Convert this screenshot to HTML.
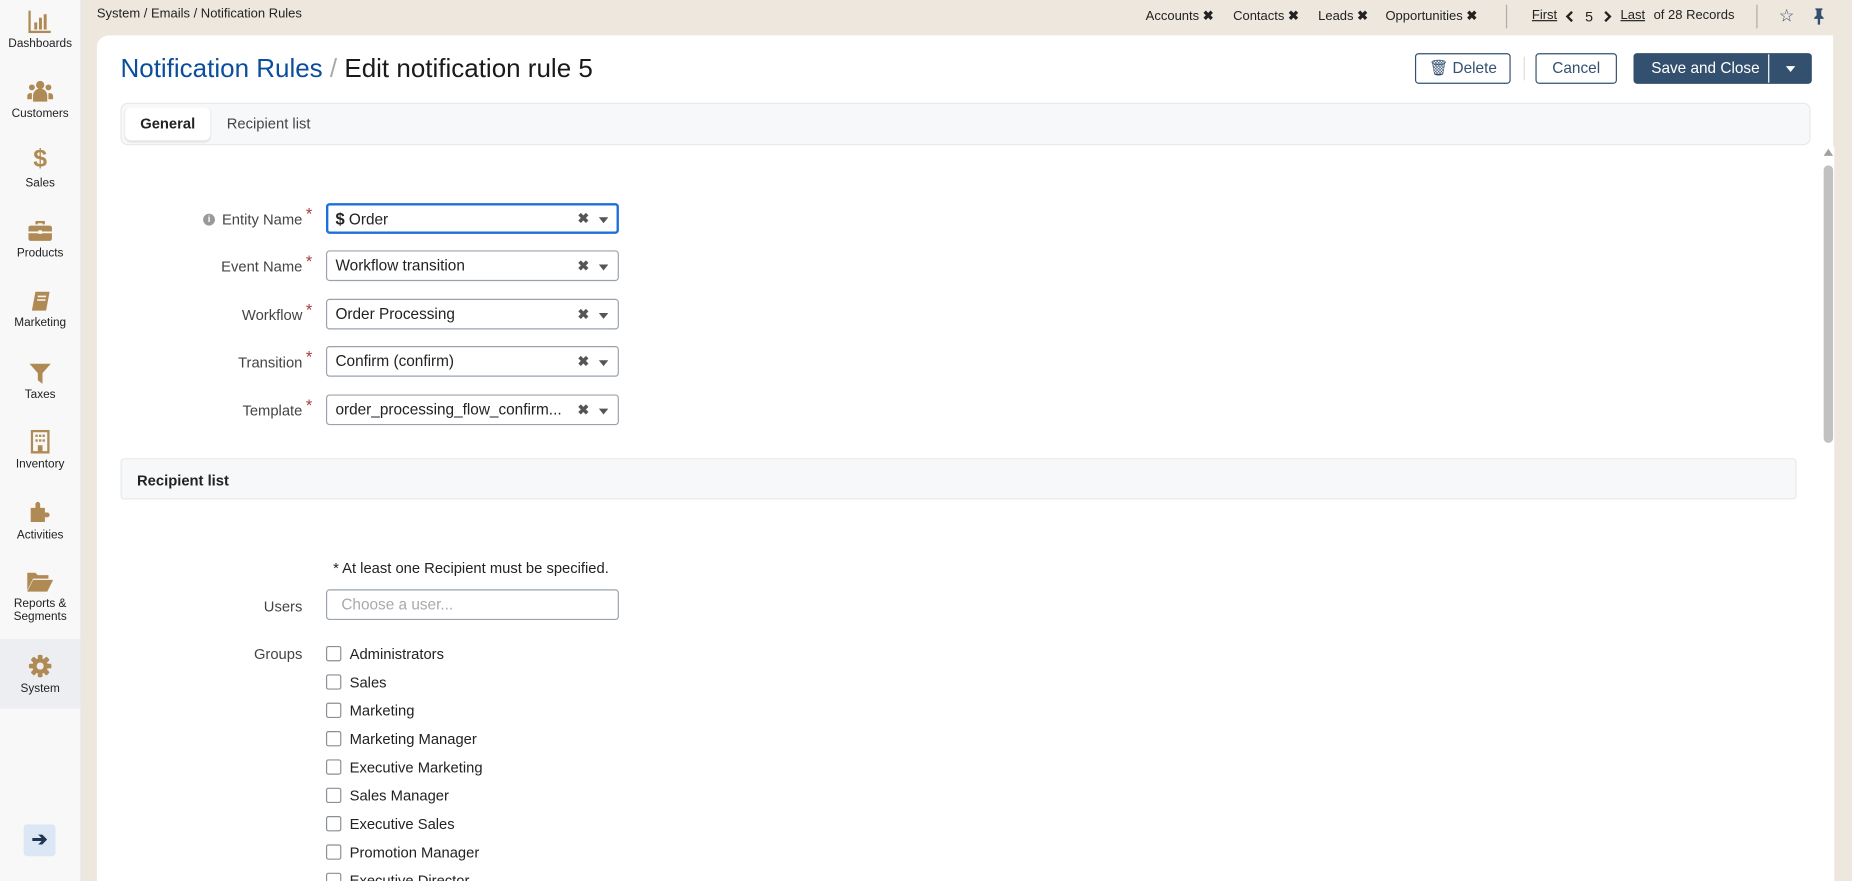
<!DOCTYPE html>
<html><head><meta charset="utf-8">
<style>
html,body{margin:0;padding:0;width:1852px;height:881px;overflow:hidden;background:#fff;}
#w{position:absolute;left:0;top:0;width:1568px;height:746px;transform:scale(1.18112,1.18097);transform-origin:0 0;font-family:"Liberation Sans",sans-serif;color:#222;font-size:12.5px;background:#ede7de;overflow:hidden;}
.a{position:absolute;}
#side{left:0;top:0;width:68px;height:746px;background:#f8f8f8;border-right:1px solid #e6e6e6;}
.si{position:absolute;left:0;width:68px;text-align:center;font-size:10px;color:#222;line-height:11px;}
.si svg{display:block;margin:0 auto 4px;}
#card{left:82px;top:30px;width:1470px;height:730px;background:#fff;border-top-left-radius:10px;}
.btn{position:absolute;height:26px;border:1px solid #34506f;border-radius:3px;box-sizing:border-box;color:#34506f;font-size:13px;line-height:24px;text-align:center;background:#fff;}
.lbl{position:absolute;right:1312px;width:150px;text-align:right;font-size:12.5px;color:#444;}
.star{position:absolute;left:259px;color:#b03a3a;font-size:14px;}
.sel{position:absolute;left:276px;width:248px;height:26px;border:1px solid #9aa3ad;border-radius:3px;box-sizing:border-box;font-size:13px;line-height:24px;padding-left:7px;color:#222;}
.sel .x{position:absolute;right:24px;top:0;font-size:12px;color:#555;font-weight:bold;}
.sel .c{position:absolute;right:8px;top:11px;width:0;height:0;border-left:4px solid transparent;border-right:4px solid transparent;border-top:5px solid #555;}
.cb{position:absolute;left:276px;width:13px;height:13px;border:1px solid #8a8f96;border-radius:2px;box-sizing:border-box;background:#fff;}
.ct{position:absolute;left:296px;font-size:12.5px;color:#222;}
.tb{position:absolute;top:7px;font-size:11px;color:#222;}
</style></head><body><div id="w">

<div class="a" style="left:82px;top:6px;font-size:11px;color:#222;">System / Emails / Notification Rules</div>
<div class="tb" style="left:970px">Accounts <b>✖</b></div>
<div class="tb" style="left:1044px">Contacts <b>✖</b></div>
<div class="tb" style="left:1116px">Leads <b>✖</b></div>
<div class="tb" style="left:1173px">Opportunities <b>✖</b></div>
<div class="a" style="left:1275px;top:4px;width:1px;height:20px;background:#aaa"></div>
<div class="tb" style="left:1297px;text-decoration:underline">First</div>
<svg class="a" style="left:1325px;top:9px" width="8" height="10" viewBox="0 0 8 10"><path d="M6 1L2 5l4 4" stroke="#222" stroke-width="2" fill="none"/></svg>
<div class="tb" style="left:1342px;font-size:12px">5</div>
<svg class="a" style="left:1357px;top:9px" width="8" height="10" viewBox="0 0 8 10"><path d="M2 1l4 4-4 4" stroke="#222" stroke-width="2" fill="none"/></svg>
<div class="tb" style="left:1372px;text-decoration:underline">Last</div>
<div class="tb" style="left:1400px">of 28 Records</div>
<div class="a" style="left:1487px;top:4px;width:1px;height:20px;background:#aaa"></div>
<div class="tb" style="left:1506px;top:4px;font-size:15px;color:#34506f">☆</div>
<svg class="a" style="left:1535px;top:7px" width="10" height="14" viewBox="0 0 10 14"><path d="M2 0h6v1l-1 1v4l2 2v1H6v5H4V9H1V8l2-2V2L2 1z" fill="#34506f"/></svg>

<div id="side" class="a">
 <div class="si" style="top:8px"><svg width="20" height="20" viewBox="0 0 20 20"><path d="M1 1v18h18" stroke="#b08a55" stroke-width="2" fill="none"/><rect x="5" y="11" width="2.5" height="6" fill="#b08a55"/><rect x="9" y="7" width="2.5" height="10" fill="#b08a55"/><rect x="13" y="4" width="2.5" height="13" fill="#b08a55"/></svg>Dashboards</div>
 <div class="si" style="top:67px"><svg width="22" height="20" viewBox="0 0 22 20"><circle cx="11" cy="5" r="3.5" fill="#b08a55"/><circle cx="4" cy="7" r="2.5" fill="#b08a55"/><circle cx="18" cy="7" r="2.5" fill="#b08a55"/><path d="M5 19v-5a6 6 0 0112 0v5z" fill="#b08a55"/><path d="M0 17v-3a3 3 0 014-2v5zM22 17v-3a3 3 0 00-4-2v5z" fill="#b08a55"/></svg>Customers</div>
 <div class="si" style="top:125px"><div style="font-size:21px;font-weight:bold;color:#b08a55;line-height:20px;margin-bottom:5px">$</div>Sales</div>
 <div class="si" style="top:187px"><svg width="20" height="18" viewBox="0 0 20 18"><path d="M7 3V1h6v2" stroke="#b08a55" stroke-width="2" fill="none"/><rect x="0" y="4" width="20" height="13" rx="2" fill="#b08a55"/><rect x="0" y="9" width="20" height="1.5" fill="#f8f8f8"/><rect x="8.5" y="8" width="3" height="3" fill="#f8f8f8"/></svg>Products</div>
 <div class="si" style="top:246px"><svg width="18" height="18" viewBox="0 0 18 18"><path d="M5 1h12l-3 16H2z" fill="#b08a55"/><path d="M7 5h7M6.5 8h7" stroke="#f8f8f8" stroke-width="1.3"/></svg>Marketing</div>
 <div class="si" style="top:307px"><svg width="18" height="18" viewBox="0 0 18 18"><path d="M0 1h18l-7 8v9l-4-3V9z" fill="#b08a55"/></svg>Taxes</div>
 <div class="si" style="top:364px"><svg width="16" height="20" viewBox="0 0 16 20"><rect x="1" y="1" width="14" height="18" fill="none" stroke="#b08a55" stroke-width="2"/><g fill="#b08a55"><rect x="4" y="4" width="2" height="2"/><rect x="7" y="4" width="2" height="2"/><rect x="10" y="4" width="2" height="2"/><rect x="4" y="8" width="2" height="2"/><rect x="7" y="8" width="2" height="2"/><rect x="10" y="8" width="2" height="2"/><rect x="6" y="13" width="4" height="6"/></g></svg>Inventory</div>
 <div class="si" style="top:424px"><svg width="20" height="20" viewBox="0 0 20 20"><path d="M2 6h4V3a2 2 0 014 0v3h4v4h2a2 2 0 010 4h-2v4H2z" fill="#b08a55"/></svg>Activities</div>
 <div class="si" style="top:484px"><svg width="22" height="18" viewBox="0 0 22 18"><path d="M0 1h7l2 2h9v3H5L0 16z" fill="#b08a55"/><path d="M5 7h17l-5 10H0z" fill="#b08a55"/></svg>Reports &amp;<br>Segments</div>
 <div class="a" style="left:0;top:541px;width:68px;height:59px;background:#eceef1"></div>
 <div class="si" style="top:554px"><svg width="20" height="20" viewBox="0 0 20 20"><g fill="#b08a55"><circle cx="10" cy="10" r="6.5"/><rect x="8" y="0.5" width="4" height="19" rx="1"/><rect x="8" y="0.5" width="4" height="19" rx="1" transform="rotate(45 10 10)"/><rect x="8" y="0.5" width="4" height="19" rx="1" transform="rotate(90 10 10)"/><rect x="8" y="0.5" width="4" height="19" rx="1" transform="rotate(135 10 10)"/></g><circle cx="10" cy="10" r="3" fill="#eceef1"/></svg>System</div>
 <div class="a" style="left:20px;top:698px;width:27px;height:27px;background:#dbe7f4;border-radius:3px;text-align:center;line-height:27px;font-size:16px;font-weight:bold;color:#1f3550">➔</div>
</div>

<div id="card" class="a"></div>
<div class="a" style="left:102px;top:45px;font-size:22px;color:#0b4e9c">Notification Rules <span style="color:#aaa">/</span> <span style="color:#1a1a1a">Edit notification rule 5</span></div>

<div class="btn" style="left:1198px;top:45px;width:81px">🗑 Delete</div>
<div class="a" style="left:1290px;top:48px;width:1px;height:20px;background:#ddd"></div>
<div class="btn" style="left:1300px;top:45px;width:69px">Cancel</div>
<div class="btn" style="left:1383px;top:45px;width:151px;background:#34506f;color:#fff;text-align:left;padding-left:14px">Save and Close</div>
<div class="a" style="left:1497px;top:46px;width:1px;height:24px;background:#fff"></div>
<div class="a" style="left:1512px;top:56px;border-left:4px solid transparent;border-right:4px solid transparent;border-top:5px solid #fff"></div>

<div class="a" style="left:102px;top:87px;width:1431px;height:36px;box-sizing:border-box;background:#f7f8fa;border:1px solid #e6e8eb;border-radius:6px"></div>
<div class="a" style="left:106px;top:91px;width:72px;height:28px;background:#fff;border-radius:5px;box-shadow:0 1px 2px rgba(0,0,0,.12);text-align:center;line-height:28px;font-size:12.5px;font-weight:bold;color:#222">General</div>
<div class="a" style="left:192px;top:98px;font-size:12.5px;color:#444">Recipient list</div>

<div class="a" style="left:172px;top:181px;width:10px;height:10px;border-radius:50%;background:#999;color:#fff;font-size:8px;line-height:10px;text-align:center;font-weight:bold">i</div>
<div class="lbl" style="top:179px">Entity Name</div><div class="star" style="top:173px">*</div>
<div class="sel" style="top:172px;border:2px solid #1e6fd9;line-height:22px;padding-left:6px"><b style="font-size:14px">$</b> Order<span class="x" style="right:23px">✖</span><span class="c" style="right:7px;top:10px"></span></div>
<div class="lbl" style="top:219px">Event Name</div><div class="star" style="top:213px">*</div>
<div class="sel" style="top:212px">Workflow transition<span class="x">✖</span><span class="c"></span></div>
<div class="lbl" style="top:260px">Workflow</div><div class="star" style="top:254px">*</div>
<div class="sel" style="top:253px">Order Processing<span class="x">✖</span><span class="c"></span></div>
<div class="lbl" style="top:300px">Transition</div><div class="star" style="top:294px">*</div>
<div class="sel" style="top:293px">Confirm (confirm)<span class="x">✖</span><span class="c"></span></div>
<div class="lbl" style="top:341px">Template</div><div class="star" style="top:335px">*</div>
<div class="sel" style="top:334px">order_processing_flow_confirm...<span class="x">✖</span><span class="c"></span></div>

<div class="a" style="left:102px;top:388px;width:1419px;height:35px;box-sizing:border-box;background:#f7f8fa;border:1px solid #e6e8eb;border-radius:3px"></div>
<div class="a" style="left:116px;top:400px;font-size:12.5px;font-weight:bold;color:#222">Recipient list</div>

<div class="a" style="left:282px;top:474px;font-size:12.5px;color:#222">* At least one Recipient must be specified.</div>
<div class="lbl" style="top:507px">Users</div>
<div class="sel" style="top:499px;color:#aaa;padding-left:12px">Choose a user...</div>
<div class="lbl" style="top:547px">Groups</div>

<div class="cb" style="top:547px"></div><div class="ct" style="top:547px">Administrators</div>
<div class="cb" style="top:571px"></div><div class="ct" style="top:571px">Sales</div>
<div class="cb" style="top:595px"></div><div class="ct" style="top:595px">Marketing</div>
<div class="cb" style="top:619px"></div><div class="ct" style="top:619px">Marketing Manager</div>
<div class="cb" style="top:643px"></div><div class="ct" style="top:643px">Executive Marketing</div>
<div class="cb" style="top:667px"></div><div class="ct" style="top:667px">Sales Manager</div>
<div class="cb" style="top:691px"></div><div class="ct" style="top:691px">Executive Sales</div>
<div class="cb" style="top:715px"></div><div class="ct" style="top:715px">Promotion Manager</div>
<div class="cb" style="top:739px"></div><div class="ct" style="top:739px">Executive Director</div>

<div class="a" style="left:1541px;top:124px;width:12px;height:622px;background:#fff"></div>
<div class="a" style="left:1544px;top:126px;border-left:4px solid transparent;border-right:4px solid transparent;border-bottom:6px solid #a0a0a0"></div>
<div class="a" style="left:1544px;top:140px;width:8px;height:235px;background:#c1c1c1;border-radius:4px"></div>
</div></body></html>
